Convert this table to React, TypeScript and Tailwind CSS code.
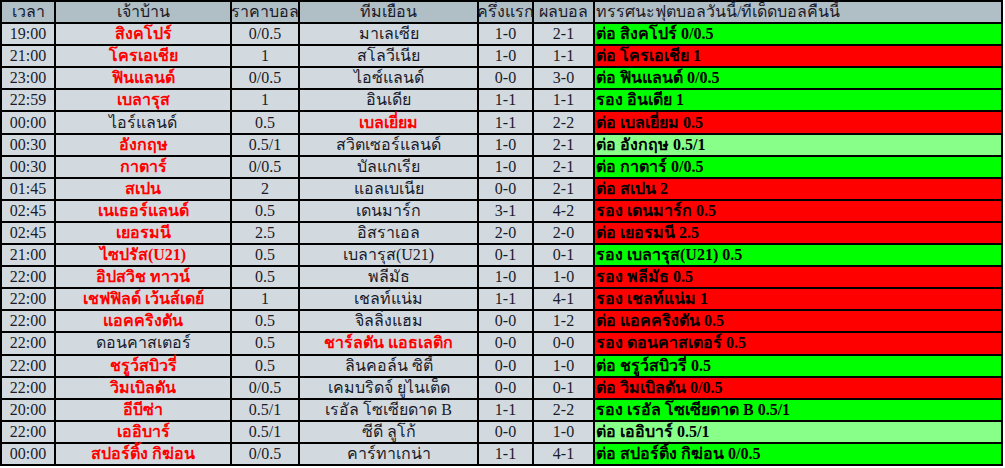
type Row = {
  time: string;
  home: string;
  homeFav: boolean;
  odds: string;
  away: string;
  half: string;
  full: string;
  tip: string;
  tone: "green" | "red" | "lime";
};

const rows: Row[] = [
  { time: "19:00", home: "สิงคโปร์", homeFav: true, odds: "0/0.5", away: "มาเลเซีย", half: "1-0", full: "2-1", tip: "ต่อ สิงคโปร์ 0/0.5", tone: "green" },
  { time: "21:00", home: "โครเอเชีย", homeFav: true, odds: "1", away: "สโลวีเนีย", half: "1-0", full: "1-1", tip: "ต่อ โครเอเชีย 1", tone: "red" },
  { time: "23:00", home: "ฟินแลนด์", homeFav: true, odds: "0/0.5", away: "ไอซ์แลนด์", half: "0-0", full: "3-0", tip: "ต่อ ฟินแลนด์ 0/0.5", tone: "green" },
  { time: "22:59", home: "เบลารุส", homeFav: true, odds: "1", away: "อินเดีย", half: "1-1", full: "1-1", tip: "รอง อินเดีย 1", tone: "green" },
  { time: "00:00", home: "ไอร์แลนด์", homeFav: false, odds: "0.5", away: "เบลเยี่ยม", half: "1-1", full: "2-2", tip: "ต่อ เบลเยี่ยม 0.5", tone: "red" },
  { time: "00:30", home: "อังกฤษ", homeFav: true, odds: "0.5/1", away: "สวิตเซอร์แลนด์", half: "1-0", full: "2-1", tip: "ต่อ อังกฤษ 0.5/1", tone: "lime" },
  { time: "00:30", home: "กาตาร์", homeFav: true, odds: "0/0.5", away: "บัลแกเรีย", half: "1-0", full: "2-1", tip: "ต่อ กาตาร์ 0/0.5", tone: "green" },
  { time: "01:45", home: "สเปน", homeFav: true, odds: "2", away: "แอลเบเนีย", half: "0-0", full: "2-1", tip: "ต่อ สเปน 2", tone: "red" },
  { time: "02:45", home: "เนเธอร์แลนด์", homeFav: true, odds: "0.5", away: "เดนมาร์ก", half: "3-1", full: "4-2", tip: "รอง เดนมาร์ก 0.5", tone: "red" },
  { time: "02:45", home: "เยอรมนี", homeFav: true, odds: "2.5", away: "อิสราเอล", half: "2-0", full: "2-0", tip: "ต่อ เยอรมนี 2.5", tone: "red" },
  { time: "21:00", home: "ไซปรัส(U21)", homeFav: true, odds: "0.5", away: "เบลารุส(U21)", half: "0-1", full: "0-1", tip: "รอง เบลารุส(U21) 0.5", tone: "green" },
  { time: "22:00", home: "อิปสวิช ทาวน์", homeFav: true, odds: "0.5", away: "พลีมัธ", half: "1-0", full: "1-0", tip: "รอง พลีมัธ 0.5", tone: "red" },
  { time: "22:00", home: "เชฟฟิลด์ เว้นส์เดย์", homeFav: true, odds: "1", away: "เชลท์แน่ม", half: "1-1", full: "4-1", tip: "รอง เชลท์แน่ม 1", tone: "red" },
  { time: "22:00", home: "แอคคริงตัน", homeFav: true, odds: "0.5", away: "จิลลิ่งแฮม", half: "0-0", full: "1-2", tip: "ต่อ แอคคริงตัน 0.5", tone: "red" },
  { time: "22:00", home: "ดอนคาสเตอร์", homeFav: false, odds: "0.5", away: "ชาร์ลตัน แอธเลติก", half: "0-0", full: "0-0", tip: "รอง ดอนคาสเตอร์ 0.5", tone: "red" },
  { time: "22:00", home: "ชรูว์สบิวรี่", homeFav: true, odds: "0.5", away: "ลินคอล์น ซิตี้", half: "0-0", full: "1-0", tip: "ต่อ ชรูว์สบิวรี่ 0.5", tone: "green" },
  { time: "22:00", home: "วิมเบิลดัน", homeFav: true, odds: "0/0.5", away: "เคมบริดจ์ ยูไนเต็ด", half: "0-0", full: "0-1", tip: "ต่อ วิมเบิลดัน 0/0.5", tone: "red" },
  { time: "20:00", home: "อีบีซ่า", homeFav: true, odds: "0.5/1", away: "เรอัล โซเซียดาด B", half: "1-1", full: "2-2", tip: "รอง เรอัล โซเซียดาด B 0.5/1", tone: "green" },
  { time: "22:00", home: "เออิบาร์", homeFav: true, odds: "0.5/1", away: "ซีดี ลูโก้", half: "0-0", full: "1-0", tip: "ต่อ เออิบาร์ 0.5/1", tone: "lime" },
  { time: "00:00", home: "สปอร์ติ้ง กิฆ่อน", homeFav: true, odds: "0/0.5", away: "คาร์ทาเกน่า", half: "1-1", full: "4-1", tip: "ต่อ สปอร์ติ้ง กิฆ่อน 0/0.5", tone: "green" },
];

const headers = ["เวลา", "เจ้าบ้าน", "ราคาบอล", "ทีมเยือน", "ครึ่งแรก", "ผลบอล"];

const toneClass = {
  green: "bg-[#00ff00]",
  red: "bg-[#ff0000]",
  lime: "bg-[#88ff88]",
};

function Cell({ children, team }: { children: React.ReactNode; team?: boolean }) {
  return (
    <div
      className={
        "flex items-center justify-center whitespace-nowrap bg-[#d2dae0] text-[16px] leading-[20px] " +
        (team ? "font-bold text-[#ff0000]" : "text-[#1a1a2a]")
      }
    >
      {children}
    </div>
  );
}

export default function App() {
  return (
    <div className="min-h-[468px] bg-white font-['Liberation_Serif',serif]">
      {/* 21 rows, each a touch over 20px so the table ends where the original does */}
      <div className="grid h-[466px] w-fit grid-cols-[52px_174px_66px_177px_53px_59px_406px] auto-rows-fr gap-[2px] bg-black p-[2px]">
        {headers.map((h) => (
          <div
            key={h}
            className="flex items-center justify-center whitespace-nowrap bg-[#b0bec5] text-[16px] leading-[20px] text-[#1a1a2a]"
          >
            {h}
          </div>
        ))}
        <div className="flex items-center whitespace-nowrap bg-[#b0bec5] pl-[1px] text-[16px] leading-[20px] text-[#1a1a2a]">
          ทรรศนะฟุตบอลวันนี้/ทีเด็ดบอลคืนนี้
        </div>

        {rows.map((r, i) => (
          <div key={i} className="contents">
            <Cell>{r.time}</Cell>
            <Cell team={r.homeFav}>{r.home}</Cell>
            <Cell>{r.odds}</Cell>
            <Cell team={!r.homeFav}>{r.away}</Cell>
            <Cell>{r.half}</Cell>
            <Cell>{r.full}</Cell>
            <div
              className={
                "flex items-center whitespace-nowrap pl-[1px] text-[16px] font-bold leading-[20px] text-black " +
                toneClass[r.tone]
              }
            >
              {r.tip}
            </div>
          </div>
        ))}
      </div>
    </div>
  );
}
